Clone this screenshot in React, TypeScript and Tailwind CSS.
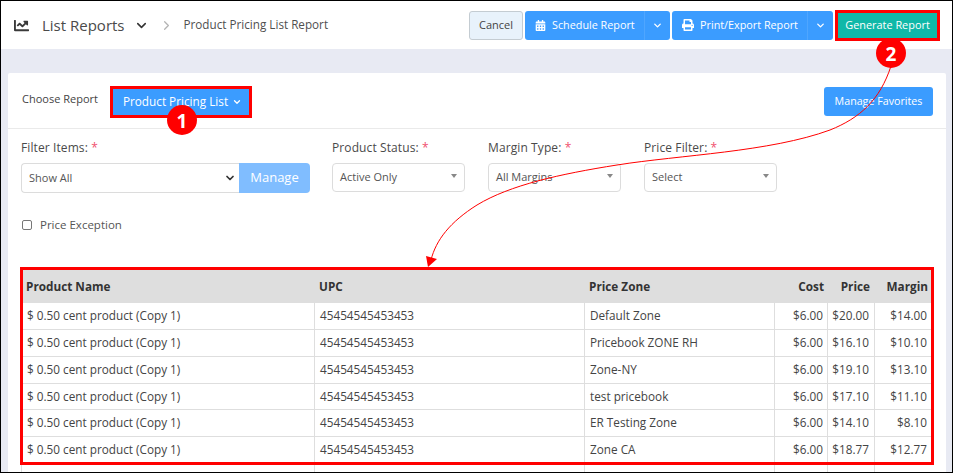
import { FaChartLine, FaCalendarAlt, FaPrint } from "react-icons/fa";
import { ChevronDown, ChevronRight } from "lucide-react";

const rows = [
  ["Default Zone", "$20.00", "$14.00", "h-[27px]"],
  ["Pricebook ZONE RH", "$16.10", "$10.10", "h-[27px]"],
  ["Zone-NY", "$19.10", "$13.10", "h-[27px]"],
  ["test pricebook", "$17.10", "$11.10", "h-[26px]"],
  ["ER Testing Zone", "$14.10", "$8.10", "h-[27px]"],
  ["Zone CA", "$18.77", "$12.77", "h-[25px]"],
];

function Label({ text }: { text: string }) {
  return (
    <div className="h-[18px] text-[12px] leading-[18px] text-[#4a4a4a] tracking-[0.1px]">
      {text} <span className="text-[#f0506e]">*</span>
    </div>
  );
}

function Select({ text, width }: { text: string; width: string }) {
  return (
    <div className={`${width} mt-[6px] h-[29px] border border-[#dcdcdc] rounded-[4px] bg-white flex items-center justify-between pl-[7px] pr-[7px]`}>
      <span className="text-[11px] text-[#555]">{text}</span>
      <span className="w-0 h-0 border-l-[3.5px] border-r-[3.5px] border-t-[4px] border-l-transparent border-r-transparent border-t-[#888] mb-[4px]" />
    </div>
  );
}

function SplitButton({ icon, text, width }: { icon: React.ReactNode; text: string; width: string }) {
  return (
    <div className={`${width} h-[29px] bg-[#3b9cff] rounded-[3px] flex items-center text-white text-[10.8px]`}>
      <div className="flex-1 flex items-center pl-[10px] gap-[6px]">
        {icon}
        <span>{text}</span>
      </div>
      <div className="w-[26px] h-full flex items-center justify-center border-l border-[#4fa6ff]">
        <ChevronDown size={11} strokeWidth={3} />
      </div>
    </div>
  );
}

export default function App() {
  return (
    <div className="relative w-[953px] h-[473px] overflow-hidden border border-black bg-[#e8eaf3] text-[#3f3f3f]" style={{ fontFamily: '"Open Sans", sans-serif' }}>
      <header className="h-[48px] bg-white flex items-center pl-[13px] pr-[12px]">
        <FaChartLine size={15} className="text-[#3a3a3a]" />
        <span className="ml-[13px] text-[15px] text-[#4a4a4a]">List Reports</span>
        <ChevronDown size={15} strokeWidth={2.5} className="ml-[9px] text-[#333]" />
        <ChevronRight size={15} strokeWidth={2} className="ml-[10px] text-[#b4b4b4]" />
        <span className="ml-[10px] text-[11.7px] text-[#4f4f4f]">Product Pricing List Report</span>
        <div className="ml-auto flex items-center gap-[2px]">
          <div className="w-[54px] h-[29px] bg-[#e8f2fb] border border-[#c4ccd2] rounded-[3px] flex items-center justify-center text-[11px] text-[#444]">Cancel</div>
          <SplitButton icon={<FaCalendarAlt size={11} />} text="Schedule Report" width="w-[145px]" />
          <SplitButton icon={<FaPrint size={12} />} text="Print/Export Report" width="w-[161px]" />
          <div className="w-[105px] h-[31px] bg-[#0fb8a8] border-[3px] border-[#ff0000] flex items-center justify-center text-white text-[10.9px]">Generate Report</div>
        </div>
      </header>

      <main className="ml-[7px] mt-[24px] w-[938px] bg-white rounded-t-[2px] pt-[1px]">
        <div className="h-[55px] flex items-center border-b border-[#eaeaea] pl-[14px] pr-[13px]">
          <span className="text-[11px] text-[#444] mb-[4px]">Choose Report</span>
          <div className="ml-[12px] mt-[2px] w-[142px] h-[32px] bg-[#3b9cff] border-[3px] border-[#ff0000] flex items-center pl-[10px] gap-[4px] text-white text-[11.75px]">
            Product Pricing List
            <ChevronDown size={10} strokeWidth={3} />
          </div>
          <div className="ml-auto w-[109px] h-[29px] bg-[#3b9cff] rounded-[3px] flex items-center justify-center text-white text-[10.7px]">Manage Favorites</div>
        </div>

        <div className="flex pl-[13px] pt-[10px]">
          <div className="w-[289px]">
            <Label text="Filter Items:" />
            <div className="mt-[6px] h-[30px] flex">
              <div className="flex-1 border border-[#dcdcdc] border-r-0 rounded-l-[4px] flex items-center justify-between pl-[7px] pr-[3px]">
                <span className="text-[11px] text-[#555]">Show All</span>
                <ChevronDown size={12} strokeWidth={3.5} className="text-[#333]" />
              </div>
              <div className="w-[71px] bg-[#80bdff] rounded-r-[4px] flex items-center justify-center text-white text-[13px]">Manage</div>
            </div>
          </div>
          <div className="ml-[22px] w-[133px]">
            <Label text="Product Status:" />
            <Select text="Active Only" width="w-[133px]" />
          </div>
          <div className="ml-[23px] w-[133px]">
            <Label text="Margin Type:" />
            <Select text="All Margins" width="w-[133px]" />
          </div>
          <div className="ml-[23px] w-[133px]">
            <Label text="Price Filter:" />
            <Select text="Select" width="w-[133px]" />
          </div>
        </div>

        <div className="flex items-center pl-[14px] mt-[23px] h-[18px]">
          <span className="w-[10px] h-[10px] border border-[#777] rounded-[2px]" />
          <span className="ml-[8px] text-[11.5px] text-[#555]">Price Exception</span>
        </div>

        <div className="ml-[12px] mt-[33px] w-[914px] border-[3px] border-[#ff0000]">
          <table className="w-[908px] table-fixed border-separate border-spacing-0 text-[11.75px] text-[#444]">
            <colgroup>
              <col className="w-[292px]" />
              <col className="w-[270px]" />
              <col className="w-[190px]" />
              <col className="w-[53px]" />
              <col className="w-[47px]" />
              <col className="w-[56px]" />
            </colgroup>
            <thead>
              <tr className="h-[33px] bg-[#dedede] font-bold text-[#333]">
                <th className="text-left pl-[3px] font-bold">Product Name</th>
                <th className="text-left pl-[4px] font-bold">UPC</th>
                <th className="text-left pl-[4px] font-bold">Price Zone</th>
                <th className="text-right pr-[4px] font-bold">Cost</th>
                <th className="text-right pr-[5px] font-bold">Price</th>
                <th className="text-right pr-[3px] font-bold">Margin</th>
              </tr>
            </thead>
            <tbody>
              {rows.map((r, i) => {
                const b = i < 5 ? "border-b border-[#dedede]" : "";
                return (
                  <tr key={i} className={r[3]}>
                    <td className={`pl-[4px] border-r border-[#dedede] ${b}`}>$ 0.50 cent product (Copy 1)</td>
                    <td className={`pl-[5px] border-r border-[#dedede] ${b}`}>45454545453453</td>
                    <td className={`pl-[5px] border-r border-[#dedede] ${b}`}>{r[0]}</td>
                    <td className={`text-right pr-[4px] border-r border-[#dedede] ${b}`}>$6.00</td>
                    <td className={`text-right pr-[5px] border-r border-[#dedede] ${b}`}>{r[1]}</td>
                    <td className={`text-right pr-[4px] ${b}`}>{r[2]}</td>
                  </tr>
                );
              })}
            </tbody>
          </table>
        </div>
        <div className="ml-[13px] w-[910px] h-[10px] flex">
          <div className="w-[294px] border-l border-r border-[#dedede]" />
          <div className="w-[270px] border-r border-[#dedede]" />
          <div className="w-[190px] border-r border-[#dedede]" />
          <div className="w-[53px] border-r border-[#dedede]" />
          <div className="w-[47px] border-r border-[#dedede]" />
        </div>
      </main>

      <svg className="absolute left-[-1px] top-[-1px] pointer-events-none" width="953" height="473" viewBox="0 0 953 473" fill="none">
        <path d="M891 66 C 880 100, 860 118, 830 130 C 770 152, 680 155, 617 165 C 560 174, 510 185, 477 205 C 450 222, 436 240, 431 260" stroke="#ff0000" strokeWidth="1" />
        <path d="M428 267 L426 256 L437 259 Z" fill="#ff0000" />
        <circle cx="182" cy="120" r="15" fill="#ff0000" />
        <circle cx="891" cy="53" r="15" fill="#ff0000" />
      </svg>
      <div className="absolute left-[166px] top-[108px] w-[30px] h-[24px] flex items-center justify-center text-white font-bold text-[19px] leading-none">1</div>
      <div className="absolute left-[875px] top-[41px] w-[30px] h-[24px] flex items-center justify-center text-white font-bold text-[19px] leading-none">2</div>
    </div>
  );
}
